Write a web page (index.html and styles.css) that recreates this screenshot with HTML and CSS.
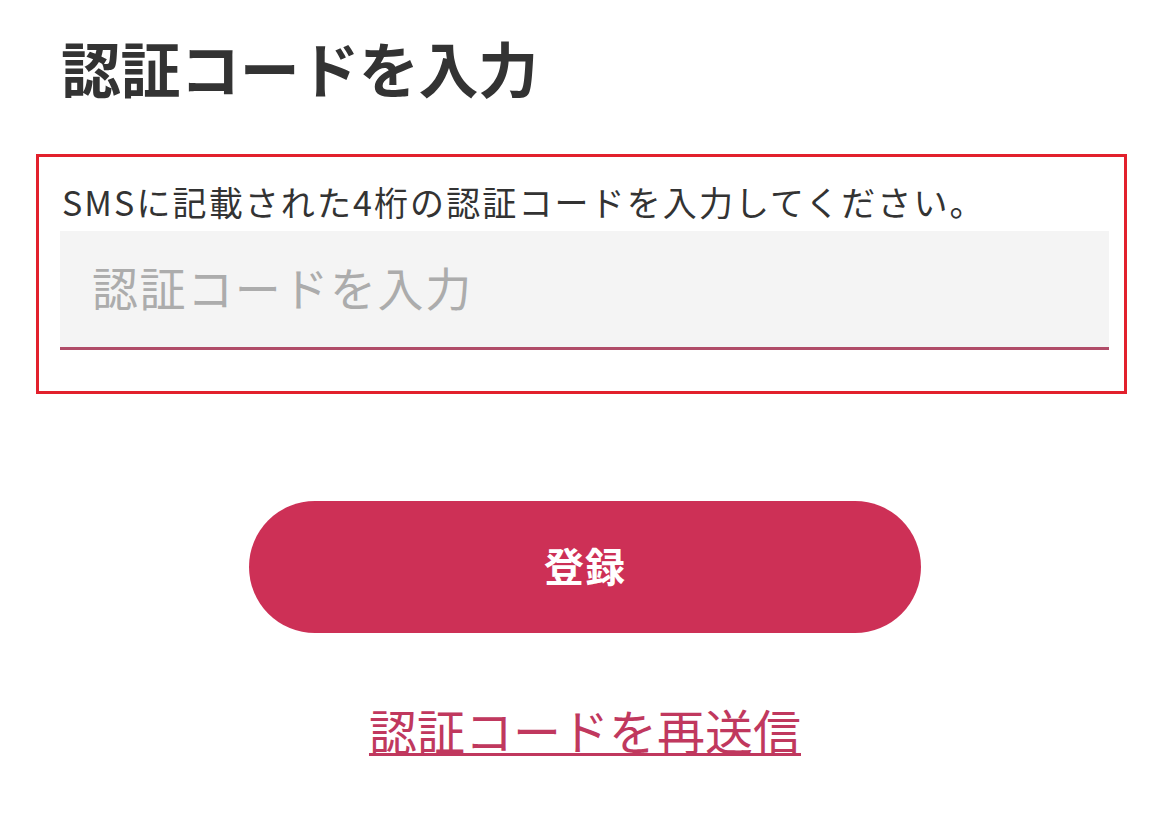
FILE: index.html
```html
<!DOCTYPE html>
<html lang="ja">
<head>
<meta charset="utf-8">
<title>認証コードを入力</title>
<link rel="stylesheet" href="styles.css">
</head>
<body>
<main class="page">
  <h1 class="title">認証コードを入力</h1>
  <section class="code-box">
    <p class="hint">SMSに記載された4桁の認証コードを入力してください。</p>
    <input class="code-input" type="text" placeholder="認証コードを入力">
  </section>
  <div class="actions">
    <button class="submit" type="button">登録</button>
    <a class="resend" href="#">認証コードを再送信</a>
  </div>
</main>
</body>
</html>
```

FILE: styles.css
```css
html, body {
  margin: 0;
  padding: 0;
  background: #ffffff;
}

body {
  font-family: "Noto Sans CJK JP", "Noto Sans", sans-serif;
  color: #333333;
}

.page {
  width: 1170px;
  height: 827px;
  box-sizing: border-box;
  padding-top: 24px;
  overflow: hidden;
}

.title {
  margin: 0 0 0 61px;
  font-size: 60px;
  line-height: 86px;
  font-weight: 700;
  letter-spacing: -0.4px;
  color: #333333;
}

.code-box {
  margin: 44px 43px 0 36px;
  border: 3px solid #e2202c;
  padding: 20px 15px 41px 21px;
}

.hint {
  margin: 0 0 0 2px;
  font-size: 34px;
  line-height: 50px;
  color: #333333;
  letter-spacing: 2.1px;
  white-space: nowrap;
}

.code-input {
  display: block;
  width: 100%;
  height: 119px;
  margin-top: 4px;
  box-sizing: border-box;
  border: none;
  border-bottom: 3px solid #b04c68;
  background: #f4f4f4;
  padding: 0 0 6px 32px;
  font-family: inherit;
  font-size: 46px;
  letter-spacing: 1.6px;
  color: #333333;
  outline: none;
}

.code-input::placeholder {
  color: #acacac;
}

.actions {
  display: flex;
  flex-direction: column;
  align-items: center;
  margin-top: 107px;
}

.submit {
  width: 672px;
  height: 132px;
  border: none;
  border-radius: 66px;
  background: #cd3056;
  color: #ffffff;
  font-family: inherit;
  font-size: 40px;
  font-weight: 700;
  letter-spacing: 1px;
  padding: 0 0 4px 0;
  cursor: pointer;
}

.resend {
  margin-top: 63px;
  font-size: 48px;
  line-height: 66px;
  color: #c0385e;
  text-decoration: underline;
  text-decoration-thickness: 3px;
  text-underline-offset: 3px;
}
```
